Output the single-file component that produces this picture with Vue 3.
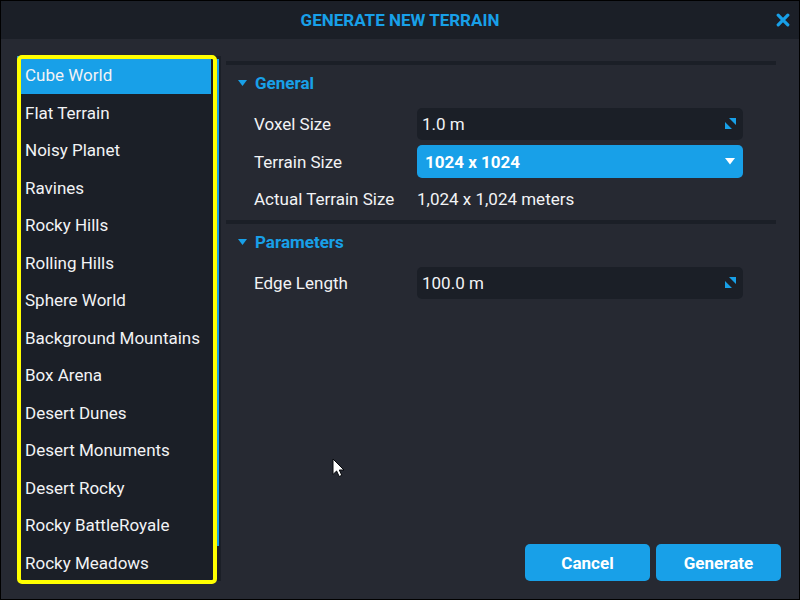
<script setup>
import { ref } from 'vue'

const presets = [
  'Cube World', 'Flat Terrain', 'Noisy Planet', 'Ravines', 'Rocky Hills',
  'Rolling Hills', 'Sphere World', 'Background Mountains', 'Box Arena',
  'Desert Dunes', 'Desert Monuments', 'Desert Rocky', 'Rocky BattleRoyale',
  'Rocky Meadows',
]
const selected = ref('Cube World')
const generalOpen = ref(true)
const parametersOpen = ref(true)
const voxelSize = ref('1.0 m')
const terrainSize = ref('1024')
const edgeLength = ref('100.0 m')
const sizes = ['256', '512', '1024', '2048']
</script>

<template>
  <main class="dialog">
    <header class="titlebar">
      <h1>GENERATE NEW TERRAIN</h1>
      <button class="close" type="button" aria-label="Close">
        <svg width="14" height="14" viewBox="0 0 14 14">
          <path d="M2.2 2.2L11.8 11.8M11.8 2.2L2.2 11.8" stroke="currentColor" stroke-width="3.2" stroke-linecap="round" />
        </svg>
      </button>
    </header>

    <div class="body">
      <nav class="presets" aria-label="Terrain presets">
        <ul>
          <li v-for="name in presets" :key="name">
            <button type="button" :class="{ active: name === selected }" @click="selected = name">{{ name }}</button>
          </li>
        </ul>
        <div class="track"><div class="thumb"></div></div>
        <div class="highlight"></div>
      </nav>

      <div class="content">
        <div class="sections">
          <section>
            <button class="heading" type="button" :aria-expanded="generalOpen" @click="generalOpen = !generalOpen">
              <svg width="9" height="6" viewBox="0 0 9 6"><path d="M0 0H9L4.5 6Z" fill="currentColor" /></svg>
              <span>General</span>
            </button>
            <div v-if="generalOpen" class="rows">
              <div class="row">
                <label for="voxel">Voxel Size</label>
                <div class="field">
                  <input id="voxel" v-model="voxelSize" type="text">
                  <svg class="drag" width="11" height="11" viewBox="0 0 11 11"><path d="M4 0H11V7ZM0 4L7 11H0Z" fill="currentColor" /></svg>
                </div>
              </div>
              <div class="row">
                <label for="size">Terrain Size</label>
                <div class="field">
                  <select id="size" v-model="terrainSize">
                    <option v-for="s in sizes" :key="s" :value="s">{{ s }} x {{ s }}</option>
                  </select>
                  <svg class="arrow" width="10" height="7" viewBox="0 0 10 7"><path d="M0 0H10L5 6.500Z" fill="currentColor" /></svg>
                </div>
              </div>
              <div class="row">
                <span>Actual Terrain Size</span>
                <span>1,024 x 1,024 meters</span>
              </div>
            </div>
          </section>

          <section>
            <button class="heading" type="button" :aria-expanded="parametersOpen" @click="parametersOpen = !parametersOpen">
              <svg width="9" height="6" viewBox="0 0 9 6"><path d="M0 0H9L4.5 6Z" fill="currentColor" /></svg>
              <span>Parameters</span>
            </button>
            <div v-if="parametersOpen" class="rows">
              <div class="row">
                <label for="edge">Edge Length</label>
                <div class="field">
                  <input id="edge" v-model="edgeLength" type="text">
                  <svg class="drag" width="11" height="11" viewBox="0 0 11 11"><path d="M4 0H11V7ZM0 4L7 11H0Z" fill="currentColor" /></svg>
                </div>
              </div>
            </div>
          </section>
        </div>

        <footer class="actions">
          <button type="button">Cancel</button>
          <button type="button">Generate</button>
        </footer>
      </div>
    </div>

    <svg class="pointer" width="13" height="20" viewBox="0 0 13 20">
      <path d="M1 1V16.500L4.600 13L7.200 18.500L9.800 17.300L7.300 12H12Z" fill="#fff" stroke="#06080c" stroke-width="1" />
    </svg>
  </main>
</template>

<style>
body {
  margin: 0;
  background: #262932;
}
</style>

<style scoped>
.dialog {
  position: relative;
  box-sizing: border-box;
  display: flex;
  flex-direction: column;
  min-height: 100vh;
  border: 1px solid #000;
  background: #262932;
  color: #f2f3f5;
  font-family: Roboto, "Liberation Sans", sans-serif;
  font-size: 17px;
  line-height: 20px;
}

button,
input,
select {
  box-sizing: border-box;
  margin: 0;
  border: 0;
  padding: 0;
  background: none;
  color: inherit;
  font: inherit;
}

.titlebar {
  display: grid;
  grid-template-columns: 24px 1fr 24px;
  align-items: center;
  height: 38px;
  padding: 0 4px;
  background: #1b1f27;
  color: #18a0e8;
}

h1 {
  grid-column: 2;
  margin: 0;
  font-size: 17px;
  font-weight: 700;
  text-align: center;
}

.close {
  display: flex;
  align-items: center;
  justify-content: center;
  height: 24px;
}

.body {
  flex: 1;
  display: flex;
  gap: 5px;
  padding: 17px 18px 18px 16px;
}

.presets {
  position: relative;
  display: flex;
  flex: 0 0 204px;
  background: #1b1f27;
}

.presets ul {
  flex: 1;
  display: flex;
  flex-direction: column;
  margin: 0;
  padding: 0 5px 0 0;
  list-style: none;
}

.presets li {
  flex: 1;
  display: flex;
}

.presets li button {
  flex: 1;
  padding: 1px 8px 0;
  text-align: left;
  white-space: nowrap;
}

.presets li .active {
  background: #18a0e8;
}

.track {
  width: 5px;
  padding: 3px 2px 35px 0;
  box-sizing: border-box;
}

.thumb {
  height: 100%;
  background: #18a0e8;
}

.highlight {
  position: absolute;
  inset: -1px 4px -3px 0;
  border: 4px solid #ff0;
  border-radius: 5px;
  pointer-events: none;
}

.content {
  flex: 1;
  display: flex;
  flex-direction: column;
  justify-content: space-between;
}

.sections {
  padding: 5px 5px 0 0;
}

section {
  padding-bottom: 5px;
  border-top: 4px solid #1b1f27;
}

.heading {
  display: flex;
  align-items: center;
  gap: 8px;
  width: 100%;
  height: 36px;
  padding-left: 12px;
  color: #18a0e8;
  font-weight: 700;
}

.rows {
  display: grid;
  gap: 5px;
  padding: 7px 33px 0 28px;
}

.row {
  display: grid;
  grid-template-columns: 163px 1fr;
  align-items: center;
  min-height: 32px;
}

.field {
  position: relative;
  display: flex;
}

.field input,
.field select {
  width: 100%;
  height: 32px;
  border-radius: 5px;
}

.field input {
  padding: 0 32px 0 5px;
  background: #1b1f27;
}

.field select {
  appearance: none;
  height: 33px;
  padding: 0 32px 0 8px;
  background: #18a0e8;
  color: #fff;
  font-weight: 700;
}

.field option {
  background: #1b1f27;
}

.drag,
.arrow {
  position: absolute;
  right: 7px;
  top: 10px;
  color: #18a0e8;
  pointer-events: none;
}

.arrow {
  right: 8px;
  top: 13px;
  color: #fff;
}

.actions {
  display: flex;
  justify-content: flex-end;
  gap: 6px;
}

.actions button {
  width: 125px;
  height: 37px;
  border-radius: 5px;
  background: #18a0e8;
  color: #fff;
  font-weight: 700;
}

.pointer {
  position: absolute;
  left: 331px;
  top: 457px;
  pointer-events: none;
}
</style>
